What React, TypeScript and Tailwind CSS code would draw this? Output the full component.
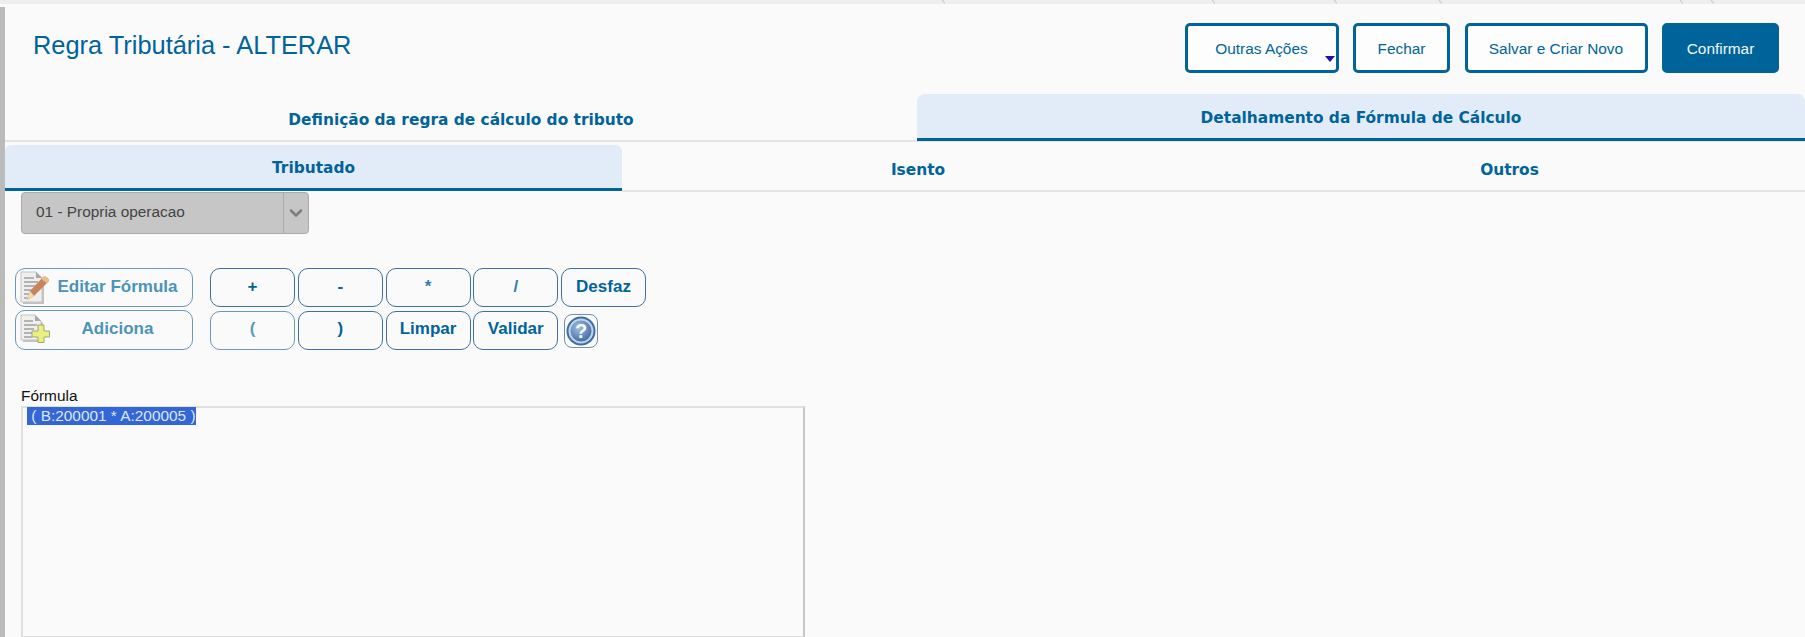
import { ChevronDown } from 'lucide-react';

const SANS = "font-['Liberation_Sans',Arial,sans-serif]";
const TAB_FONT = "font-['DejaVu_Sans',Verdana,sans-serif]";

const TICKS = [942, 1212, 1334, 1439, 1680, 1711];

function TopStrip() {
  return (
    <div className="relative h-1 shrink-0 bg-[#eeeeee]">
      {TICKS.map((x) => (
        <svg key={x} className="absolute top-0" style={{ left: x }} width="4" height="4" aria-hidden="true">
          <path d="M0.5 0 C1 1.5 1.6 2.4 3 3.5" stroke="#bdbdbd" fill="none" />
        </svg>
      ))}
    </div>
  );
}

function ActionButton({ label, width, primary }: { label: string; width: string; primary?: boolean }) {
  return (
    <button
      className={`relative h-[50px] ${width} rounded-[5px] border-[3px] border-[#00649a] pt-[2px] text-[15.4px] ${
        primary ? 'bg-[#00649a] text-[#f2f7fb]' : 'bg-[#fdfdfd] text-[#00649a]'
      }`}
    >
      {label}
    </button>
  );
}

function Header() {
  return (
    <div className="flex h-[90px] shrink-0 items-start justify-between pr-[26px] pl-[28px]">
      <h1 className="mt-[25px] text-[25.4px] leading-[32px] font-normal text-[#00649a]">Regra Tributária - ALTERAR</h1>
      <div className="mt-[19px] flex gap-[14.5px]">
        <div className="relative">
          <ActionButton label="Outras Ações" width="w-[154px]" />
          <span className="absolute top-[33px] left-[140px] h-0 w-0 border-x-[5px] border-t-[6px] border-x-transparent border-t-[#1d0fa8]" />
        </div>
        <ActionButton label="Fechar" width="w-[97px]" />
        <ActionButton label="Salvar e Criar Novo" width="w-[183px]" />
        <ActionButton label="Confirmar" width="w-[117px]" primary />
      </div>
    </div>
  );
}

function MainTabs() {
  return (
    <div className={`flex h-[47px] shrink-0 text-[15.4px] font-bold text-[#00649a] ${TAB_FONT}`}>
      <div className="flex w-[912px] items-center justify-center border-b border-[#e4e4e4] pt-[8px]">
        Definição da regra de cálculo do tributo
      </div>
      <div className="flex flex-1 items-center justify-center rounded-t-[8px] border-b-[3px] border-[#00649a] bg-[#e2ecf9] pt-[6px]">
        Detalhamento da Fórmula de Cálculo
      </div>
    </div>
  );
}

function SubTabs() {
  return (
    <div className="shrink-0 border-t border-[#e4e4e4] pt-[3px]">
      <div className={`flex h-[47px] text-[15.4px] font-bold text-[#00649a] ${TAB_FONT}`}>
        <div className="flex h-[46px] w-[617px] items-center justify-center rounded-t-[6px] border-b-[3px] border-[#00649a] bg-[#e2ecf9] pt-[5px]">
          Tributado
        </div>
        <div className="flex w-[592px] items-center justify-center border-b-2 border-[#e4e4e4] pt-[6px]">Isento</div>
        <div className="flex flex-1 items-center justify-center border-b-2 border-[#e4e4e4] pt-[6px]">Outros</div>
      </div>
    </div>
  );
}

function RuleSelect() {
  return (
    <div className="ml-[16px] flex h-[42px] w-[288px] shrink-0 items-stretch rounded-[4px] border border-[#ababab] bg-[#c6c6c6] text-[15.4px] text-[#444444]">
      <div className="flex flex-1 items-center pb-[2px] pl-[14px]">01 - Propria operacao</div>
      <div className="flex w-[25px] items-center justify-center border-l border-[#aaaaaa]">
        <ChevronDown size={20} strokeWidth={3} className="text-[#7d7d7d]" />
      </div>
    </div>
  );
}

function EditIcon() {
  return (
    <svg width="30" height="34" viewBox="0 0 30 34" className="blur-[0.4px]" aria-hidden="true">
      <path d="M3 3h15l6 6v24H3z" fill="#8a8a8a" opacity="0.5" />
      <path d="M1 1h15l6 6v24H1z" fill="#efefef" stroke="#c4c4c4" />
      <path d="M16 1v6h6z" fill="#a8a8a8" />
      <path d="M4 7h10M4 11h14M4 15h14M4 19h12M4 23h8M4 27h6" stroke="#a0a0a0" strokeWidth="1.3" />
      <path d="M7 29l3-9L23 6c2-2 7 1.5 5.5 4.5L14 25z" fill="#c8845a" />
      <path d="M23 6c2-2 7 1.5 5.5 4.5l-1.5 2-6-5z" fill="#e3c08a" />
      <path d="M7 29l3-9 4 5z" fill="#f0dcae" />
    </svg>
  );
}

function AddIcon() {
  return (
    <svg width="30" height="29" viewBox="0 0 30 29" className="blur-[0.4px]" aria-hidden="true">
      <path d="M3 3h14l6 6v19H3z" fill="#8a8a8a" opacity="0.5" />
      <path d="M1 1h14l6 6v19H1z" fill="#efefef" stroke="#c4c4c4" />
      <path d="M15 1v6h6z" fill="#a8a8a8" />
      <path d="M4 7h9M4 11h13M4 15h10M4 19h8M4 23h8" stroke="#a0a0a0" strokeWidth="1.3" />
      <path
        d="M18 11h6v6h5.5v6H24v5.5h-6V23h-6v-6h6z"
        fill="#e8f080"
        stroke="#a5a578"
        strokeWidth="1"
        strokeLinejoin="round"
      />
    </svg>
  );
}

function HelpIcon() {
  return (
    <svg width="30" height="30" viewBox="0 0 30 30" aria-hidden="true">
      <defs>
        <radialGradient id="orb" cx="0.4" cy="0.35" r="0.75">
          <stop offset="0" stopColor="#a3bfdd" />
          <stop offset="1" stopColor="#2f5f9c" />
        </radialGradient>
      </defs>
      <circle cx="15" cy="15" r="14.5" fill="#3f6ea6" />
      <circle cx="15" cy="15" r="11.5" fill="url(#orb)" stroke="#c2d3e6" strokeWidth="2" />
      <text x="15" y="22" textAnchor="middle" fontSize="20" fontWeight="700" fill="#f4f7fb" fontFamily="Liberation Sans">
        ?
      </text>
    </svg>
  );
}

const CALC_BUTTON = 'h-[39px] w-[85px] rounded-[10px] border border-[#3f6f9f] pb-[2px] text-[17px] font-bold';

function Toolbar() {
  return (
    <div className="mt-[34px] ml-[10px] flex shrink-0 gap-[17px]">
      <div className="flex w-[178px] flex-col gap-[3px] text-[17px] font-bold text-[#4b93bb]">
        <button className="relative flex h-[39px] items-center justify-center rounded-[10px] border border-[#6d97bb] pb-[2px] pl-[27px]">
          <span className="absolute top-[2px] left-[4px] flex">
            <EditIcon />
          </span>
          Editar Fórmula
        </button>
        <button className="relative flex h-[40px] items-center justify-center rounded-[10px] border border-[#6d97bb] pb-[2px] pl-[27px]">
          <span className="absolute top-[3px] left-[4px] flex">
            <AddIcon />
          </span>
          Adiciona
        </button>
      </div>
      <div className="grid grid-cols-[85px_85px_85px_85px_85px] gap-x-[2.75px] gap-y-[3px] text-[#00649a]">
        <button className={CALC_BUTTON}>+</button>
        <button className={CALC_BUTTON}>-</button>
        <button className={`${CALC_BUTTON} text-[#2f7fae]`}>*</button>
        <button className={`${CALC_BUTTON} text-[#2f7fae]`}>/</button>
        <button className={CALC_BUTTON}>Desfaz</button>
        <button className={`${CALC_BUTTON} border-[#6d97bb] text-[#5a9cc0]`}>(</button>
        <button className={CALC_BUTTON}>)</button>
        <button className={CALC_BUTTON}>Limpar</button>
        <button className={CALC_BUTTON}>Validar</button>
        <button className="mt-[3px] ml-[3px] flex h-[34px] w-[34px] items-center justify-center rounded-[8px] border border-[#6d8fb3]">
          <HelpIcon />
        </button>
      </div>
    </div>
  );
}

function FormulaField() {
  return (
    <div className="ml-[16px] mt-[37px] flex min-h-0 flex-1 flex-col text-[15.4px]">
      <label className="h-[19px] leading-[17px] text-[#111111]">Fórmula</label>
      <div className="w-[784px] flex-1 border-t-2 border-r-2 border-b border-l-2 border-t-[#e0e0e0] border-r-[#c8c8c8] border-b-[#dddddd] border-l-[#e0e0e0] pl-[4px]">
        <span className="-mt-px block w-fit bg-[#3367d6] leading-[18px] whitespace-pre text-[#dde5f5]">
          {' ( B:200001 * A:200005 )'}
        </span>
      </div>
    </div>
  );
}

export default function App() {
  return (
    <div className={`flex h-[637px] w-[1805px] flex-col overflow-hidden bg-[#fafafa] ${SANS}`}>
      <TopStrip />
      <div className="flex min-h-0 flex-1">
        <div className="mt-[3px] w-[5px] shrink-0 bg-[#bbbbbb]" />
        <div className="flex min-w-0 flex-1 flex-col">
          <Header />
          <MainTabs />
          <SubTabs />
          <RuleSelect />
          <Toolbar />
          <FormulaField />
        </div>
      </div>
    </div>
  );
}
